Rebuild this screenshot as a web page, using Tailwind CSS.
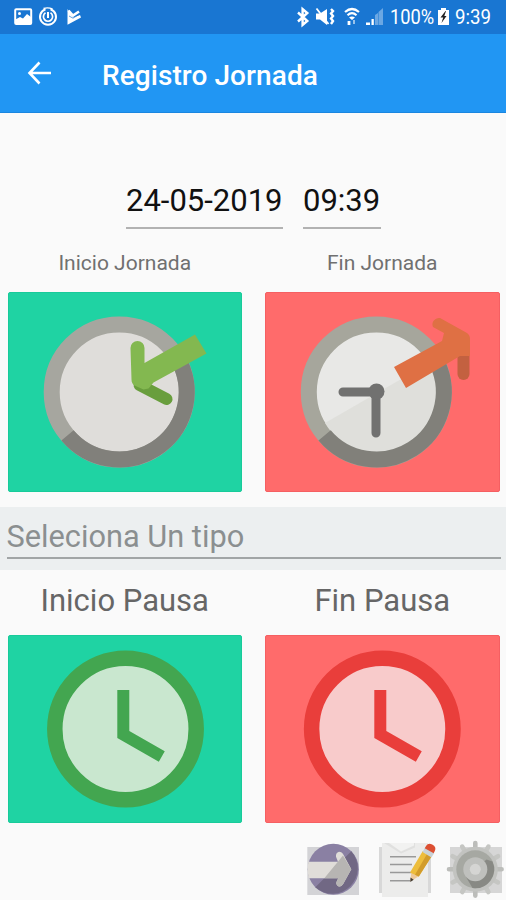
<!DOCTYPE html>
<html lang="es">
<head>
<meta charset="utf-8">
<title>Registro Jornada</title>
<script src="https://cdn.jsdelivr.net/npm/@tailwindcss/browser@4"></script>
</head>
<body class="w-[506px] h-[900px] overflow-hidden bg-[#fafafa] font-['Roboto',sans-serif] flex flex-col">
<header class="shrink-0">
  <div class="h-[34px] bg-[#1976d2] flex items-center justify-between text-white">
    <svg class="w-[90px] h-[34px]" viewBox="0 0 90 34" fill="none" stroke="#fff">
      <rect x="15.200" y="9.200" width="16" height="14.800" rx="1" stroke-width="2"/>
      <path d="M15.500 19.500 20 17l3 1.500 4-4.500 4 3v7H16z" fill="#fff" stroke="none"/><circle cx="19.500" cy="13.500" r="1.500" fill="#fff" stroke="none"/>
      <path d="M45.500 9.200A8 8 0 1 0 50.500 9.200" stroke-width="2"/><path d="M45.500 12.800a4.600 4.600 0 1 0 5 0" stroke-width="1.700"/><path d="M48 12v6" stroke-width="2"/><path d="M43.500 8.500Q48 7 52.500 9" stroke-width="1.400"/>
      <path d="M67.500 9v15.800L81 17.500l-1-2.500-7 2.500z" fill="#fff" stroke="none"/><path d="m68.500 10.500 4.500 5 6-4" stroke-width="2.600"/><path d="m69 16 4 2.200 6-3.700" stroke="#1976d2" stroke-width="0.700"/>
    </svg>
    <div class="flex items-center h-[34px]">
      <svg class="w-[92px] h-[34px]" viewBox="295 0 92 34" fill="none" stroke="#fff">
        <path d="m298 12.500 9.300 8.500-4.700 4V9l4.700 4-9.300 8.500" stroke-width="2.400"/>
        <path d="M316 13.500h4l7-4.500v16l-7-5.500h-4z" fill="#fff" stroke="none"/><path d="m316.500 8.500 12 15.500" stroke="#fff" stroke-width="1.800"/><path d="m331 9 2 2-2 2.500 2 2.500-2 2.500 2 2.500-2 3" stroke-width="2.400"/>
        <path d="M345 12q7-6 14 0M347.500 15.200q4.500-4 9 0" stroke-width="2.200"/><path d="M349 17.500q3-2 6 0L352 20z" fill="#fff" stroke="none"/>
        <path d="M349 25v-4" stroke-width="2.800"/><path d="M354 20v4" stroke-width="1.600" opacity=".7"/>
        <path d="M366 25v-2.500h4V25zM371.500 25v-6h2.300v6z" fill="#fff" stroke="none"/><path d="M375 25V15l3-2v12zM378.500 25V12l4.500-4v17z" fill="#6ba7e3" stroke="none"/>
      </svg>
      <span class="w-[48px] ml-[3px] text-[21px] leading-[34px] whitespace-nowrap"><span class="inline-block origin-left scale-x-[0.87]">100%</span></span>
      <svg class="w-[11px] h-[34px]" viewBox="0 0 11 34"><path d="M0 10h3V8h5v2h3v15H0z" fill="#fff"/><path d="M7.500 11 2.500 17.500h2.700L3.500 23l5-7H6.300L8 11z" fill="#222"/></svg>
      <span class="w-[57px] pl-[6px] text-[21px] leading-[34px] whitespace-nowrap"><span class="inline-block origin-left scale-x-[0.89]">9:39</span></span>
    </div>
  </div>
  <div class="h-[79px] bg-[#2196f3] border-b border-[#1a86e0] flex items-center">
    <svg class="ml-[27px] w-[25px] h-[24px]" viewBox="27 61 25 24" fill="none" stroke="#fff" stroke-width="2.600"><path d="M51 73H30M39.500 62.500 29.500 73l10 10.500"/></svg>
    <h1 class="ml-[50px] pb-[3px] mt-[8px] text-[28px] tracking-[0.08px] font-medium text-white leading-[36px] whitespace-nowrap">Registro Jornada</h1>
  </div>
</header>
<main class="grow flex flex-col">
  <div class="mt-[67px] ml-[126px] flex gap-[20px] text-[31px] leading-[42px] text-[#111]">
    <div class="w-[157px] h-[49px] border-b-2 border-[#b2b2b2] whitespace-nowrap">24-05-2019</div>
    <div class="w-[78px] h-[49px] border-b-2 border-[#b2b2b2] whitespace-nowrap">09:39</div>
  </div>
  <div class="mt-[19px] ml-[7.5px] mr-[6.5px] grid grid-cols-2 gap-[23px] text-center text-[21px] leading-[31px] text-[#707070]">
    <div>Inicio Jornada</div><div>Fin Jornada</div>
  </div>
  <div class="mt-[13px] ml-[7.5px] mr-[6.5px] grid grid-cols-2 gap-[23px] h-[200px]">
    <button class="rounded-[2px] bg-[#1fd3a3] border border-[#18cb9a] overflow-hidden">
      <svg class="block w-full h-full" viewBox="8.500 293.500 232.500 197">
        <circle cx="118.700" cy="392" r="67.500" fill="#dfddda" stroke="#a6a69f" stroke-width="16"/>
        <path d="M67 435.400A67.500 67.500 0 0 0 180.100 364" fill="none" stroke="#81807b" stroke-width="16"/>
        <path d="m139 385 27 14" stroke="#699e3d" stroke-width="12" stroke-linecap="round"/>
        <path d="M130 348a6.800 6.800 0 0 1 14 0v15l50.500-28.500 11.500 19-53 29-5 6-5 1-9-4q-3-2-3-6z" fill="#83b850"/>
      </svg>
    </button>
    <button class="rounded-[2px] bg-[#ff6b6b] border border-[#f55f62] overflow-hidden">
      <svg class="block w-full h-full" viewBox="266 293.500 232.500 197">
        <circle cx="376.300" cy="392" r="67.500" fill="#e8e8e6" stroke="#a6a69c" stroke-width="16"/>
        <path d="M325 423 429 363A60 60 0 0 1 325 423" fill="#dfdfdb"/>
        <path d="M324.600 435.400A67.500 67.500 0 0 0 437.700 364" fill="none" stroke="#81807a" stroke-width="16"/>
        <path d="M343 392h33v41" fill="none" stroke="#717170" stroke-width="9" stroke-linecap="round"/><circle cx="376.500" cy="391.500" r="8" fill="#717170"/>
        <path d="M463.500 349v25" stroke="#c36140" stroke-width="12" stroke-linecap="round"/>
        <path d="m394 367 48-26 2-8-11-6a6.500 6.500 0 0 1 7-9l27 15q3 2 3 6v17h-10l-54 32z" fill="#df7044"/>
      </svg>
    </button>
  </div>
  <div class="mt-[15px] h-[63px] bg-[#eceff0] pl-[6.5px] pr-[5px]">
    <div class="h-[52px] border-b-2 border-[#a1a5a6] pt-[8px] text-[30.750px] leading-[43px] text-[#8b8f90] whitespace-nowrap">Seleciona Un tipo</div>
  </div>
  <div class="mt-[10px] ml-[7.5px] mr-[6.5px] grid grid-cols-2 gap-[23px] text-center text-[31px] leading-[42px] text-[#666]">
    <div>Inicio Pausa</div><div>Fin Pausa</div>
  </div>
  <div class="mt-[13px] ml-[7.5px] mr-[6.5px] grid grid-cols-2 gap-[23px] h-[188px] shrink-0">
    <button class="rounded-[2px] bg-[#1fd3a3] border border-[#18cb9a] overflow-hidden">
      <svg class="block w-full h-full" viewBox="8.500 636 232.500 186">
        <circle cx="125" cy="729" r="70.700" fill="#c9e7cf" stroke="#43a650" stroke-width="15.500"/>
        <path d="M122.800 690v44.500l38.500 22" fill="none" stroke="#43a650" stroke-width="12"/>
      </svg>
    </button>
    <button class="rounded-[2px] bg-[#ff6b6b] border border-[#f55f62] overflow-hidden">
      <svg class="block w-full h-full" viewBox="266 636 232.500 186">
        <circle cx="382.300" cy="729" r="70.700" fill="#f8cbcb" stroke="#e93e3b" stroke-width="15.500"/>
        <path d="M380.300 690v44.500l38.500 22" fill="none" stroke="#e93e3b" stroke-width="12"/>
      </svg>
    </button>
  </div>
  <nav class="mt-[17px] flex justify-end h-[60px] shrink-0">
    <svg class="w-[66px] h-[60px]" viewBox="300 840 66 60">
      <path d="M307.300 847h51.700v48h-51.700z" fill="#d3d3d6"/>
      <circle cx="333.300" cy="869.300" r="25.500" fill="#8a80a3"/>
      <path d="M351.300 851.300a25.500 25.500 0 0 1-36 36z" fill="#716884"/>
      <path d="M308.500 861.700H338l-2-5q-.5-4 3-5 3 0 4.500 3l7.800 14.500-8 14.500q-2 3.500-5 2.500-3-2-1.500-5l1.500-3H309q-2.500-8-.5-16.500z" fill="#e0ddd9"/>
      <path d="M343 855.500 351.300 869.200l-8 14.500q-2 3.500-5 2.500-3-2-1.500-5l1.500-3h-14z" fill="#b7b5b3"/>
    </svg>
    <svg class="w-[76px] h-[60px]" viewBox="366 840 76 60">
      <path d="M379 847h52v46h-52z" fill="#d8d8d8"/>
      <path d="M382 843h46v54h-46z" fill="#ececeb"/><path d="m384 843 17 10.500 14-6V843z" fill="#e0e0df"/><path d="m389 843 12 8.500 13-6v-2.500z" fill="#f2f2f1"/>
      <path d="M390 856.700h26M390 864.500h22M390 872.500h21M390 880.700h20" stroke="#999" stroke-width="1.600"/>
      <path d="m410.300 881.500 1-9.500 7.500 4.300z" fill="#edc99b"/><path d="m410 872.500 12.800-21.500 9 5-13 20.500z" fill="#edbd3c"/><path d="m415 874.700 12.300-21.200 4.500 2.500-13 20.500z" fill="#d29c2b"/>
      <path d="m410.300 882 .2-4.500 3.200 2.200z" fill="#443c33"/><path d="m422.500 852 2.700-4.500 9 5.500-2.700 4.500z" fill="#c9d2d6"/><path d="m424.700 848.200 1.500-2.500q2-3 6-1.200 4.500 2.500 2.700 6.200l-1.200 2.500z" fill="#dc4f32"/>
    </svg>
    <svg class="w-[64px] h-[60px]" viewBox="442 840 64 60">
      <path d="M450 847h52v46h-52z" fill="#d6d6d6"/>
      <g stroke="#bcbdba" stroke-width="4.600" stroke-linecap="round"><path d="M475.300 843v52.600M449 869.300h52.600"/><path d="M462.200 846.600l26.200 45.400M488.400 846.600 462.200 892M452.600 856.200l45.400 26.200M498 856.200 452.600 882.400" stroke="#c5c6c3"/></g>
      <circle cx="475.300" cy="869.300" r="22.500" fill="#c2c3c0"/>
      <circle cx="475.300" cy="869.300" r="19" fill="#a6a8a2"/>
      <path d="m466 877 6.500 11a19 19 0 0 0 20-26.500l-6-2z" fill="#888984"/>
      <circle cx="475.300" cy="869.300" r="12" fill="#bfc0bd"/><circle cx="475.300" cy="869.300" r="5.500" fill="#d5d5d3"/>
    </svg>
  </nav>
</main>
</body>
</html>
